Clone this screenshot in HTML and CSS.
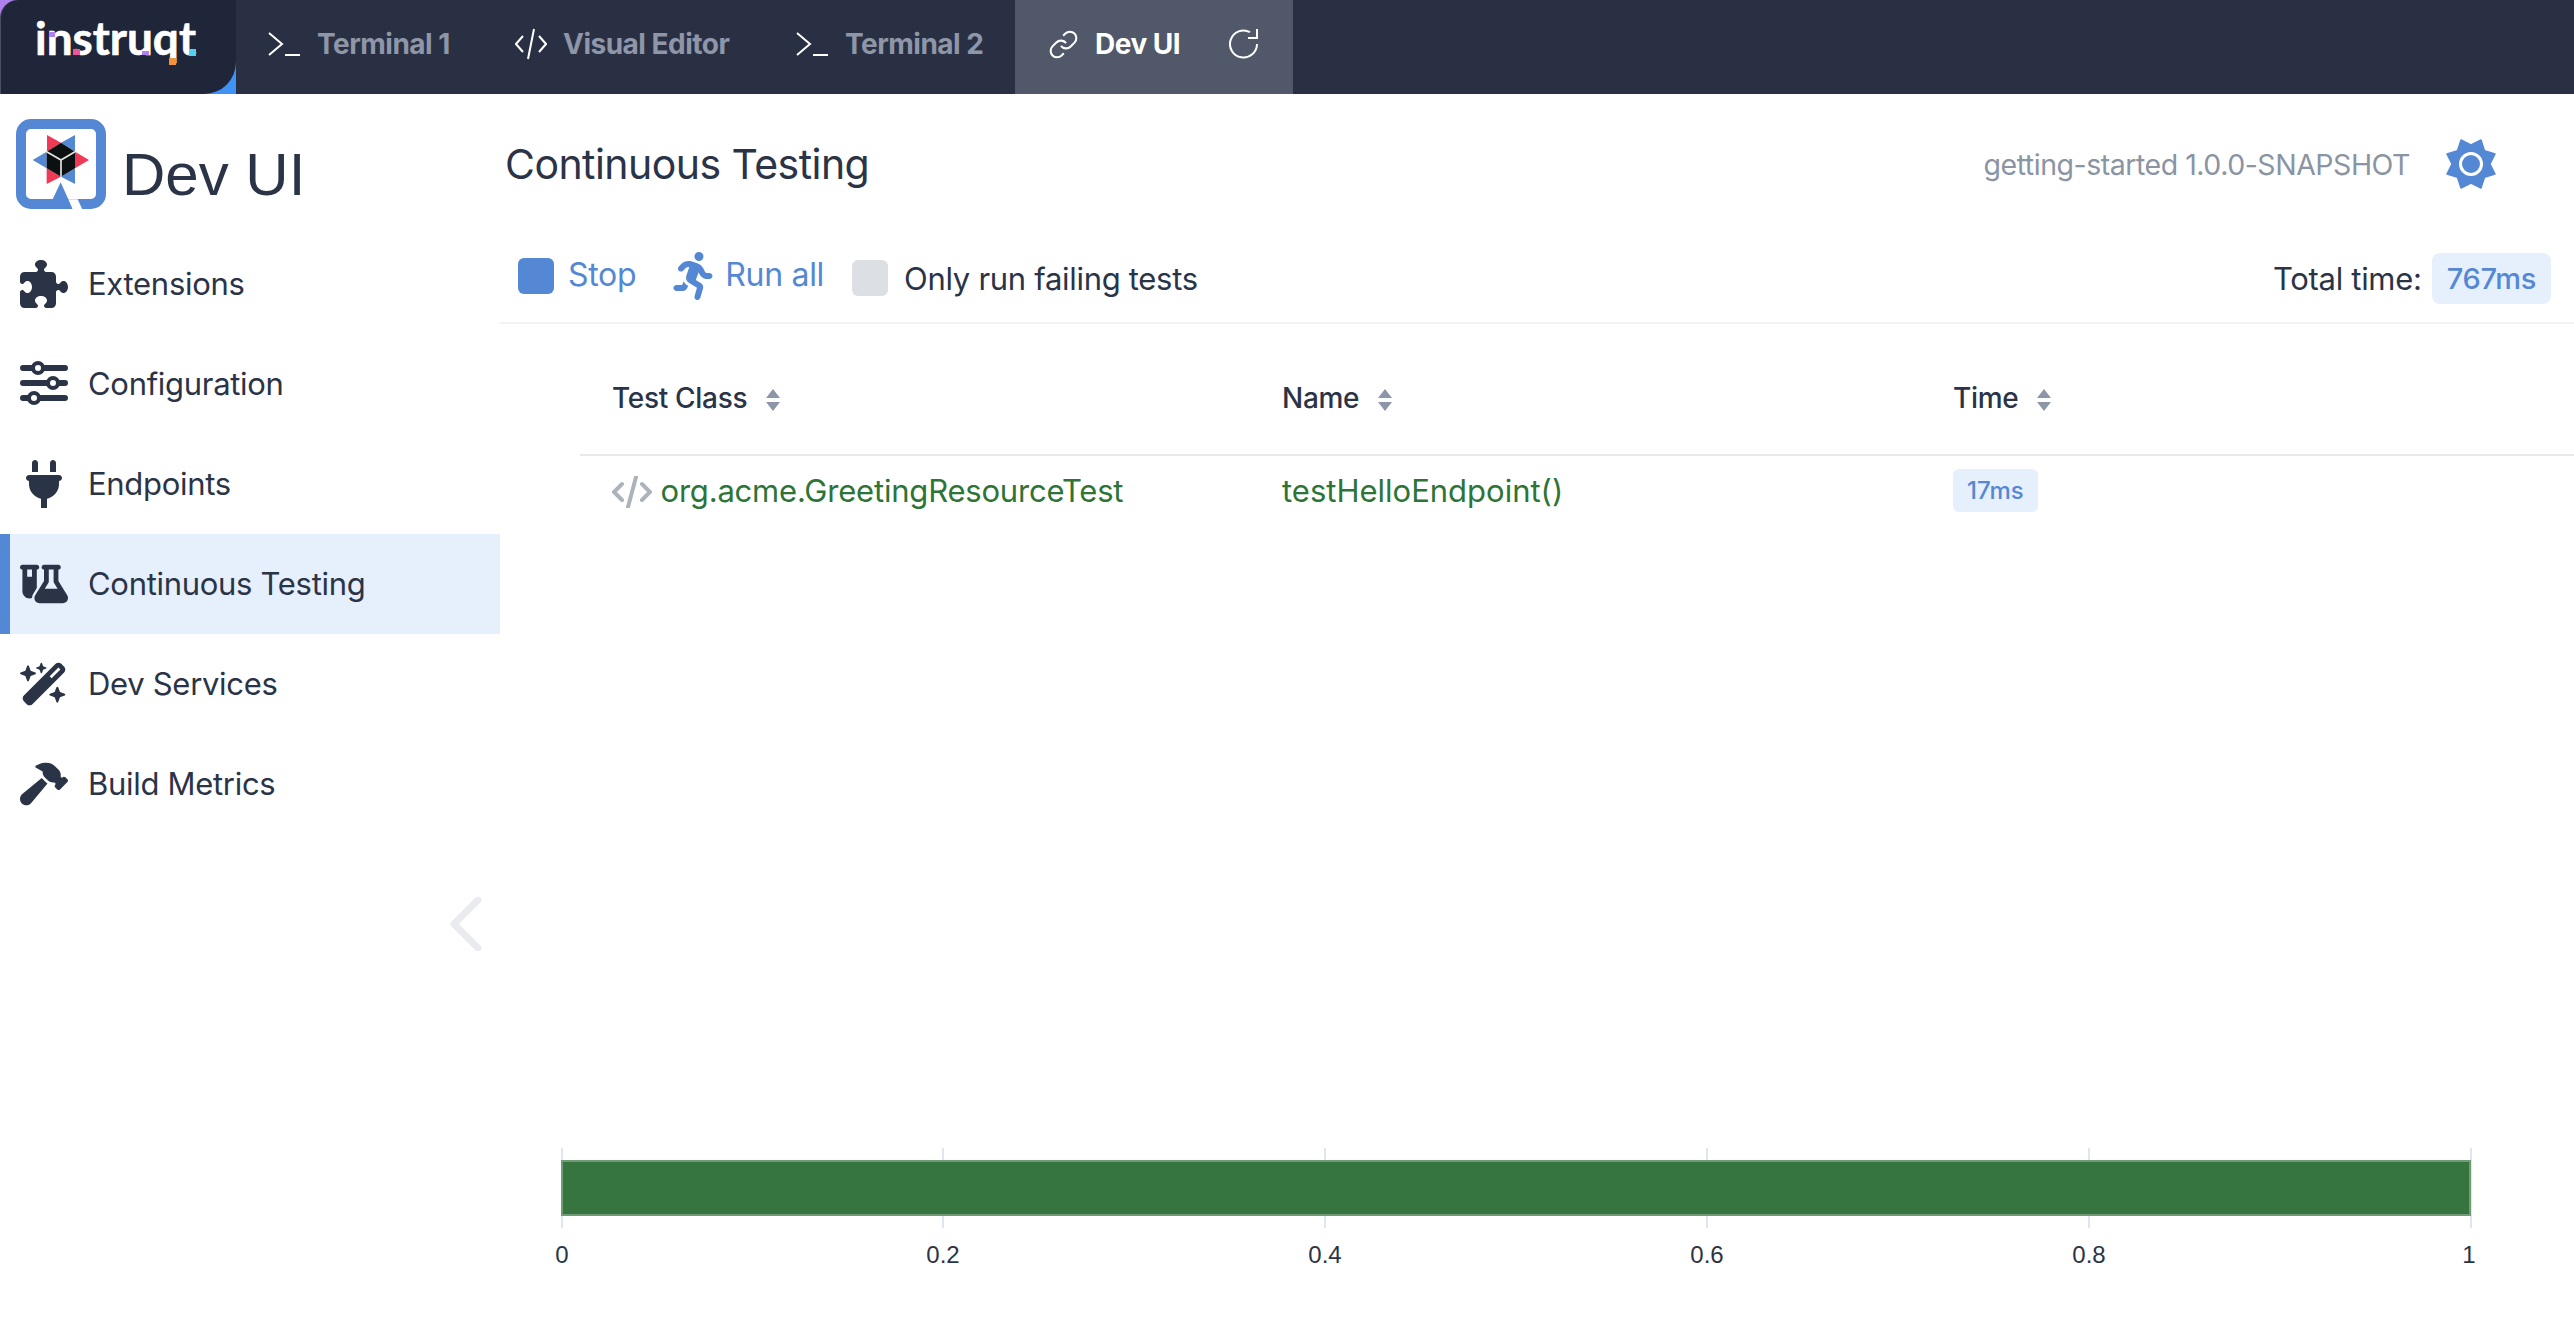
FILE: index.html
```html
<!DOCTYPE html>
<html lang="en">
<head>
    <meta charset="UTF-8">
    <meta name="viewport" content="width=device-width, initial-scale=1.0">
    <title>Dev UI</title>
    <link rel="stylesheet" href="styles.css">
</head>
<body>
    <header class="topbar">
        <div class="brand">
            <div class="brand-inner">
                <svg class="brand-logo" width="236" height="94" viewBox="0 0 236 94">
                    <text class="brand-word" x="34" y="55" textLength="161" lengthAdjust="spacingAndGlyphs">instruqt</text>
                    <rect x="48" y="32" width="6" height="5" fill="#b07ff0"/>
                    <rect x="72" y="49" width="7" height="6" fill="#e9559f"/>
                    <rect x="141" y="51" width="7" height="4" fill="#b07ff0"/>
                    <rect x="168" y="58" width="7" height="7" fill="#f2933a"/>
                    <rect x="188" y="49" width="7" height="7" fill="#4fd2f5"/>
                </svg>
            </div>
        </div>
        <a class="tab tab-one">
            <svg class="tab-icon" width="33" height="24" viewBox="0 0 33 24"><path d="M1 1l13 11L1 23M17 23h15"/></svg>
            <span>Terminal 1</span>
        </a>
        <a class="tab tab-two">
            <svg class="tab-icon" width="32" height="32" viewBox="0 0 32 32"><path d="M8 8L1 16l7 8M24 8l7 8-7 8M19 1l-6 30"/></svg>
            <span>Visual Editor</span>
        </a>
        <a class="tab tab-three">
            <svg class="tab-icon" width="33" height="24" viewBox="0 0 33 24"><path d="M1 1l13 11L1 23M17 23h15"/></svg>
            <span>Terminal 2</span>
        </a>
        <a class="tab tab-active">
            <svg class="tab-icon tab-link" width="31" height="31" viewBox="0 0 24 24"><path d="M10 13a5 5 0 0 0 7.540.540l3-3a5 5 0 0 0-7.070-7.070l-1.720 1.710M14 11a5 5 0 0 0-7.540-.540l-3 3a5 5 0 0 0 7.070 7.070l1.710-1.710"/></svg>
            <span>Dev UI</span>
            <svg class="tab-icon tab-reload" width="30" height="32" viewBox="0 0 30 32"><path d="M28 16a13.500 13.500 0 1 1-7-11.800M28 1v9h-9"/></svg>
        </a>
    </header>

    <div class="layout">
        <aside class="sidebar">
            <div class="side-head">
                <svg class="quarkus" width="90" height="90" viewBox="48 57 270 270">
                    <rect x="63" y="72" width="240" height="240" rx="30" fill="none" stroke="#5488d4" stroke-width="30"/>
                    <path d="M182 247L158 298V327H218Z" fill="#5488d4"/>
                    <path d="M218 328H247L233 298H205Z" fill="#fff"/>
                    <path d="M141 105L183 128 141 155ZM140 205L183 230 140 252ZM267 180L225 155V205Z" fill="#ee3a57"/>
                    <path d="M225 105L183 128 225 155ZM98 180L140 155V205ZM225 252V205L183 230Z" fill="#5488d4"/>
                    <path d="M183 128L225 155V205L183 230 140 205V155Z" fill="#0b1010"/>
                    <path d="M140 155L183 180 225 155M183 180V230" fill="none" stroke="#e4e6e4" stroke-width="5"/>
                </svg>
                <span class="side-title">Dev UI</span>
            </div>
            <nav>
                <a class="nav-item">
                    <svg class="nav-icon" width="48" height="48" viewBox="0 0 512 512"><path d="M192 104.800c0-9.200-5.800-17.300-13.200-22.800C167.200 73.300 160 61.300 160 48c0-26.500 28.700-48 64-48s64 21.500 64 48c0 13.300-7.200 25.300-18.800 34c-7.400 5.500-13.200 13.600-13.200 22.800c0 12.800 10.400 23.200 23.200 23.200H336c26.500 0 48 21.500 48 48v56.800c0 12.800 10.400 23.200 23.200 23.200c9.200 0 17.300-5.800 22.800-13.200c8.700-11.600 20.700-18.800 34-18.800c26.500 0 48 28.700 48 64s-21.500 64-48 64c-13.300 0-25.300-7.200-34-18.800c-5.500-7.400-13.600-13.200-22.800-13.200c-12.800 0-23.200 10.400-23.200 23.200V464c0 26.500-21.500 48-48 48H279.200c-12.800 0-23.200-10.400-23.200-23.200c0-9.200 5.800-17.300 13.200-22.800c11.600-8.700 18.800-20.700 18.800-34c0-26.500-28.700-48-64-48s-64 21.500-64 48c0 13.300 7.200 25.300 18.800 34c7.400 5.500 13.200 13.600 13.200 22.800c0 12.800-10.400 23.200-23.200 23.200H48c-26.500 0-48-21.500-48-48V343.200C0 330.400 10.400 320 23.200 320c9.200 0 17.300 5.800 22.800 13.200C54.700 344.800 66.700 352 80 352c26.500 0 48-28.700 48-64s-21.500-64-48-64c-13.300 0-25.300 7.200-34 18.800C40.500 250.200 32.400 256 23.200 256C10.400 256 0 245.600 0 232.800V176c0-26.500 21.500-48 48-48H168.800c12.800 0 23.200-10.400 23.200-23.200z"/></svg>
                    <span>Extensions</span>
                </a>
                <a class="nav-item">
                    <svg class="nav-icon nav-sliders" width="48" height="48" viewBox="0 0 48 48">
                        <path d="M3 8h42M3 23h42M3 38h42"/>
                        <circle cx="18" cy="8" r="5"/><circle cx="33" cy="23" r="5"/><circle cx="14" cy="38" r="5"/>
                    </svg>
                    <span>Configuration</span>
                </a>
                <a class="nav-item">
                    <svg class="nav-icon" width="48" height="48" viewBox="0 0 512 512"><path transform="translate(64)" d="M96 0C78.300 0 64 14.300 64 32v96h64V32c0-17.700-14.300-32-32-32zM288 0c-17.700 0-32 14.300-32 32v96h64V32c0-17.700-14.300-32-32-32zM32 160c-17.700 0-32 14.300-32 32s14.300 32 32 32v32c0 77.400 55 142 128 156.800V512h64V412.800C297 398 352 333.400 352 256V224c17.700 0 32-14.300 32-32s-14.300-32-32-32H32z"/></svg>
                    <span>Endpoints</span>
                </a>
                <a class="nav-item active">
                    <svg class="nav-icon" width="48" height="48" viewBox="0 -64 640 640"><path d="M175 389.400c-9.800 16-15 34.300-15 53.100c-10 3.500-20.800 5.500-32 5.500c-53 0-96-43-96-96V64C14.300 64 0 49.700 0 32S14.300 0 32 0H96h64 64c17.700 0 32 14.300 32 32s-14.300 32-32 32V309.900l-49 79.500zM96 64v96h64V64H96zM352 0H480h32c17.700 0 32 14.300 32 32s-14.300 32-32 32V214.900L629.700 406.200c6.700 10.900 10.300 23.500 10.300 36.400c0 38.300-31.100 69.400-69.400 69.400H261.400c-38.300 0-69.400-31.100-69.400-69.400c0-12.800 3.600-25.400 10.300-36.400L320 214.900V64c-17.700 0-32-14.300-32-32s14.300-32 32-32h32zm32 64V224c0 5.900-1.600 11.700-4.700 16.800L330.500 320h171l-48.800-79.200c-3.100-5-4.700-10.900-4.700-16.800V64H384z"/></svg>
                    <span>Continuous Testing</span>
                </a>
                <a class="nav-item">
                    <svg class="nav-icon" width="48" height="48" viewBox="0 -32 576 576"><path d="M234.700 42.700L197 56.800c-3 1.100-5 4-5 7.200s2 6.100 5 7.200l37.700 14.100L248.800 123c1.100 3 4 5 7.200 5s6.100-2 7.200-5l14.100-37.700L315 71.200c3-1.100 5-4 5-7.200s-2-6.100-5-7.200L277.300 42.700 263.200 5c-1.100-3-4-5-7.200-5s-6.100 2-7.200 5L234.700 42.700zM46.100 395.400c-18.700 18.700-18.700 49.100 0 67.900l34.600 34.600c18.700 18.700 49.100 18.700 67.900 0L529.900 116.500c18.700-18.700 18.700-49.100 0-67.900L495.300 14.100c-18.700-18.700-49.100-18.700-67.900 0L46.100 395.400zM484.600 82.600l-105 105-23.300-23.300 105-105 23.300 23.300zM7.500 117.200C3 118.900 0 123.200 0 128s3 9.100 7.500 10.800L64 160l21.200 56.500c1.700 4.500 6 7.500 10.800 7.500s9.100-3 10.800-7.500L128 160l56.500-21.200c4.500-1.700 7.500-6 7.500-10.800s-3-9.100-7.500-10.800L128 96 106.800 39.500C105.100 35 100.800 32 96 32s-9.100 3-10.800 7.500L64 96 7.500 117.200zm352 256c-4.500 1.700-7.500 6-7.500 10.800s3 9.100 7.500 10.800L416 416l21.200 56.500c1.700 4.500 6 7.500 10.800 7.500s9.100-3 10.800-7.500L480 416l56.500-21.200c4.500-1.700 7.500-6 7.500-10.800s-3-9.100-7.500-10.800L480 352l-21.200-56.500c-1.700-4.500-6-7.500-10.800-7.500s-9.100 3-10.800 7.500L416 352l-56.500 21.200z"/></svg>
                    <span>Dev Services</span>
                </a>
                <a class="nav-item">
                    <svg class="nav-icon" width="48" height="48" viewBox="0 -32 576 576"><path d="M413.500 237.500c-28.200 4.800-58.200-3.600-80-25.400l-38.100-38.100C280.400 159 272 138.800 272 117.600V105.500L192.300 62c-5.300-2.900-8.600-8.600-8.300-14.700s3.900-11.500 9.500-14l47.200-21C259.100 4.200 279 0 299.200 0h18.100c36.700 0 72 14 98.700 39.100l44.600 42c24.200 22.800 33.200 55.700 26.600 86L503 183l8-8c9.400-9.400 24.600-9.400 33.900 0l24 24c9.400 9.400 9.400 24.600 0 33.900l-88 88c-9.400 9.400-24.600 9.400-33.900 0l-24-24c-9.400-9.400-9.400-24.600 0-33.900l8-8-17.500-17.500zM27.400 377.100L260.900 182.600c3.500 4.900 7.500 9.600 11.800 14l38.100 38.100c6 6 12.400 11.200 19.200 15.700L134.900 484.600c-14.500 17.400-36 27.400-58.600 27.400C34.100 512 0 477.800 0 435.700c0-22.600 10.100-44.100 27.400-58.600z"/></svg>
                    <span>Build Metrics</span>
                </a>
            </nav>
            <svg class="collapse" width="32" height="54" viewBox="0 0 32 54"><path d="M28 3L4 27l24 24"/></svg>
        </aside>

        <main class="page">
            <div class="page-head">
                <h1>Continuous Testing</h1>
                <div class="app-info">
                    <span class="app-version">getting-started 1.0.0-SNAPSHOT</span>
                    <svg class="theme" width="50" height="50" viewBox="-25 -25 50 50">
                        <path d="M0-19L10-24 13.400-13.400 24-10 19 0 24 10 13.400 13.400 10 24 0 19-10 24-13.400 13.400-24 10-19 0-24-10-13.400-13.400-10-24Z" fill="#5488d4" stroke="#5488d4" stroke-width="1.500" stroke-linejoin="round"/>
                        <circle r="10.500" fill="#5488d4" stroke="#fff" stroke-width="3"/>
                    </svg>
                </div>
            </div>

            <div class="toolbar">
                <button class="btn">
                    <span class="stop-box"></span>
                    <span class="btn-label">Stop</span>
                </button>
                <button class="btn btn-run">
                    <svg width="40" height="48" viewBox="0 0 417 512" fill="#5488d4"><path d="M320 48a48 48 0 1 0 -96 0 48 48 0 1 0 96 0zM125.700 175.500c9.900-9.900 23.400-15.500 37.500-15.500c1.900 0 3.800 .1 5.600 .3L137.600 254c-9.300 28 1.700 58.800 26.800 74.500l86.200 53.900-25.400 88.800c-4.900 17 5 34.700 22 39.600s34.700-5 39.600-22l28.700-100.400c5.900-20.600-2.600-42.600-20.700-53.900L238 299l30.900-82.400 5.100 12.300C289 264.700 323.900 288 362.700 288H384c17.700 0 32-14.300 32-32s-14.300-32-32-32H362.700c-12.900 0-24.600-7.800-29.500-19.700l-6.300-15c-14.600-35.100-44.100-61.900-80.500-73.100l-48.700-15c-11.100-3.400-22.700-5.200-34.400-5.200c-31 0-60.800 12.300-82.700 34.300L57.400 153.400c-12.500 12.500-12.500 32.800 0 45.300s32.800 12.500 45.300 0l23.100-23.100zM91.200 352H32c-17.700 0-32 14.300-32 32s14.300 32 32 32h69.600c19 0 36.200-11.200 43.900-28.500L157 361.600l-9.500-6c-17.500-10.900-30.500-26.800-37.900-44.900L91.200 352z"/></svg>
                    <span class="btn-label">Run all</span>
                </button>
                <label class="check">
                    <span class="check-box"></span>
                    <span>Only run failing tests</span>
                </label>
                <div class="total">
                    <span>Total time:</span>
                    <span class="badge-total">767ms</span>
                </div>
            </div>

            <table class="results">
                <thead>
                    <tr>
                        <th class="col-class">Test Class<svg class="sort" width="16" height="22" viewBox="0 0 16 22"><path d="M8 0l7 9H1zM8 22l7-9H1z"/></svg></th>
                        <th class="col-name">Name<svg class="sort" width="16" height="22" viewBox="0 0 16 22"><path d="M8 0l7 9H1zM8 22l7-9H1z"/></svg></th>
                        <th>Time<svg class="sort" width="16" height="22" viewBox="0 0 16 22"><path d="M8 0l7 9H1zM8 22l7-9H1z"/></svg></th>
                    </tr>
                </thead>
                <tbody>
                    <tr>
                        <td class="test-ok">
                            <svg class="code" width="40" height="32" viewBox="0 0 40 32"><path d="M10 8L2 16l8 8M30 8l8 8-8 8M24 1l-8 30"/></svg>
                            org.acme.GreetingResourceTest
                        </td>
                        <td class="test-ok test-name">testHelloEndpoint()</td>
                        <td><span class="badge-time">17ms</span></td>
                    </tr>
                </tbody>
            </table>

            <svg class="chart" width="2074" height="180" viewBox="500 1140 2074 180">
                <g class="ticks">
                    <path d="M562 1148V1228M943 1148V1228M1325 1148V1228M1707 1148V1228M2089 1148V1228M2471 1148V1228"/>
                </g>
                <rect x="562" y="1161" width="1908" height="54" fill="#36753f" stroke="#6f9c76" stroke-width="2"/>
                <g class="chart-labels">
                    <text x="562" y="1263">0</text>
                    <text x="943" y="1263">0.2</text>
                    <text x="1325" y="1263">0.4</text>
                    <text x="1707" y="1263">0.6</text>
                    <text x="2089" y="1263">0.8</text>
                    <text x="2469" y="1263">1</text>
                </g>
            </svg>
        </main>
    </div>
</body>
</html>
```

FILE: styles.css
```css
* {
    box-sizing: border-box;
}
body {
    margin: 0;
    width: 2574px;
    height: 1320px;
    overflow: hidden;
    font-family: Inter, "Liberation Sans", sans-serif;
    font-size: 31px;
    letter-spacing: -0.3px;
    color: #2b3447;
    background: #fff;
}
svg {
    display: block;
    flex: none;
}

/* top bar */
.topbar {
    display: flex;
    height: 94px;
    background: #2a3044;
}
.brand {
    width: 236px;
    background: linear-gradient(135deg, #b07ff0 50%, #3f93f7 50%);
}
.brand-inner {
    height: 100%;
    background: #20263a;
    border-radius: 18px 0 32px 0;
    border-left: 1px solid #4a4f5e;
}
.brand-word {
    font-family: Lato, sans-serif;
    font-weight: 700;
    font-size: 45px;
    letter-spacing: 0;
    fill: #fff;
    stroke: #fff;
    stroke-width: 0.6;
}
.tab {
    display: flex;
    align-items: center;
    gap: 16px;
    height: 94px;
    padding-bottom: 6px;
    font-size: 28px;
    font-weight: 700;
    letter-spacing: -0.5px;
    color: #8f96a8;
}
.tab-icon {
    fill: none;
    stroke: #fff;
    stroke-width: 2;
}
.tab-link {
    stroke-width: 1.600;
}
.tab-one {
    padding-left: 32px;
    width: 279px;
}
.tab-two {
    width: 281px;
}
.tab-three {
    width: 219px;
}
.tab-active {
    padding-left: 33px;
    width: 278px;
    background: #505869;
    color: #fff;
}
.tab-reload {
    margin-left: 33px;
}

/* sidebar */
.layout {
    display: flex;
    height: 1226px;
}
.sidebar {
    position: relative;
    width: 500px;
    flex: none;
}
.side-head {
    display: flex;
    align-items: flex-end;
    gap: 16px;
    height: 140px;
    padding: 24px 0 0 16px;
}
.quarkus {
    margin-bottom: 25px;
}
.side-title {
    font-family: "Liberation Sans", sans-serif;
    font-size: 60px;
    letter-spacing: 0;
    line-height: 90px;
    margin-bottom: 14px;
}
.nav-item {
    display: flex;
    align-items: center;
    gap: 20px;
    height: 100px;
    padding-left: 20px;
}
.nav-item span {
    padding-bottom: 2px;
}
.nav-item.active {
    background: #e6effc;
    border-left: 10px solid #5488d4;
    padding-left: 10px;
}
.nav-icon {
    fill: #2b3447;
}
.nav-sliders path {
    fill: none;
    stroke: #2b3447;
    stroke-width: 6;
    stroke-linecap: round;
}
.nav-sliders circle {
    fill: #fff;
    stroke: #2b3447;
    stroke-width: 4;
}
.collapse {
    position: absolute;
    left: 450px;
    top: 803px;
    fill: none;
    stroke: #e9ebee;
    stroke-width: 7;
    stroke-linecap: round;
    stroke-linejoin: round;
}

/* main area */
.page {
    flex: 1;
    display: flex;
    flex-direction: column;
}
.page-head {
    display: flex;
    justify-content: space-between;
    align-items: center;
    height: 140px;
    padding: 0 78px 0 5px;
}
h1 {
    margin: 0;
    font-size: 41px;
    font-weight: 400;
    letter-spacing: -0.55px;
}
.app-info {
    display: flex;
    align-items: center;
    gap: 36px;
}
.app-version {
    font-size: 28.500px;
    letter-spacing: -0.47px;
    color: #8a94a3;
}
.toolbar {
    display: flex;
    align-items: center;
    height: 90px;
    padding: 0 23px 0 18px;
    border-bottom: 2px solid #f1f2f4;
}
.btn {
    display: flex;
    align-items: center;
    gap: 14px;
    padding: 0;
    border: 0;
    background: none;
    font: inherit;
    font-size: 32px;
    letter-spacing: inherit;
    color: #5488d4;
    margin-bottom: 4px;
}
.btn-label {
    padding-bottom: 4px;
}
.stop-box {
    width: 36px;
    height: 36px;
    border-radius: 6px;
    background: #5488d4;
}
.btn-run {
    margin-left: 37px;
    gap: 12px;
}
.check {
    display: flex;
    align-items: center;
    gap: 16px;
    margin-left: 28px;
}
.check-box {
    width: 36px;
    height: 36px;
    border-radius: 6px;
    background: #dcdfe4;
}
.total {
    display: flex;
    align-items: center;
    gap: 10px;
    margin-left: auto;
}
.badge-total {
    padding: 8px 15px;
    border-radius: 8px;
    background: #e6effc;
    color: #5488d4;
    font-weight: 500;
    font-size: 29px;
    line-height: 35px;
}

/* results table */
.results {
    margin-left: 80px;
    width: 1994px;
    table-layout: fixed;
    border-collapse: collapse;
}
.col-class {
    width: 670px;
}
.col-name {
    width: 671px;
}
th {
    height: 131px;
    padding: 18px 0 0 32px;
    text-align: left;
    font-size: 28px;
    font-weight: 500;
    border-bottom: 2px solid #e8e9ee;
}
.sort {
    display: inline-block;
    margin-left: 18px;
    vertical-align: -3px;
    fill: #8d96a6;
}
td {
    height: 72px;
    padding: 0 0 2px 32px;
}
.test-ok {
    color: #2d7436;
    letter-spacing: -0.2px;
}
.test-name {
    letter-spacing: 0;
}
.code {
    display: inline-block;
    vertical-align: -6px;
    fill: none;
    stroke: #adb3bd;
    stroke-width: 4;
    stroke-linecap: round;
}
.badge-time {
    display: inline-block;
    padding: 0 14px;
    border-radius: 6px;
    background: #e6effc;
    color: #5488d4;
    font-size: 24px;
    font-weight: 500;
    letter-spacing: 0;
    line-height: 43px;
}

/* chart */
.chart {
    margin-top: auto;
}
.ticks path {
    fill: none;
    stroke: #e0e5f2;
    stroke-width: 2;
}
.chart-labels text {
    font-family: "Liberation Sans", sans-serif;
    font-size: 24px;
    letter-spacing: 0;
    fill: #2b3447;
    text-anchor: middle;
}
```
